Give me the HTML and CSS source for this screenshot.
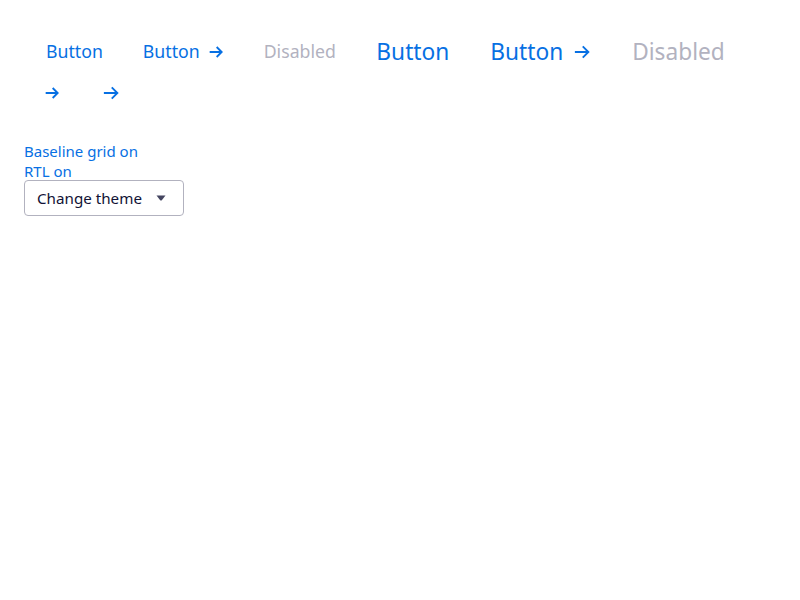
FILE: index.html
```html
<!DOCTYPE html>
<html>
<head>
<meta charset="utf-8">
<link rel="stylesheet" href="styles.css">
</head>
<body>
<div class="page">
  <div class="buttons">
    <button class="link">Button</button>
    <button class="link">Button <svg class="arr" width="16" height="16" viewBox="0 0 24 24"><path d="M2.5 12h18M13 4.5l7.5 7.5-7.5 7.5" fill="none" stroke="currentColor" stroke-width="2.8"/></svg></button>
    <button class="link disabled">Disabled</button>
    <button class="link large">Button</button>
    <button class="link large">Button <svg class="arr" width="18" height="18" viewBox="0 0 24 24"><path d="M2.5 12h18M13 4.5l7.5 7.5-7.5 7.5" fill="none" stroke="currentColor" stroke-width="2.5"/></svg></button>
    <button class="link large disabled">Disabled</button>
    <button class="link icon"><svg width="16" height="16" viewBox="0 0 24 24"><path d="M2.5 12h18M13 4.5l7.5 7.5-7.5 7.5" fill="none" stroke="currentColor" stroke-width="2.8"/></svg></button>
    <button class="link icon"><svg width="18" height="18" viewBox="0 0 24 24"><path d="M2.5 12h18M13 4.5l7.5 7.5-7.5 7.5" fill="none" stroke="currentColor" stroke-width="2.5"/></svg></button>
  </div>
  <div class="controls">
    <a class="toggle">Baseline grid on</a>
    <a class="toggle">RTL on</a>
    <div class="select">Change theme <svg class="caret" width="10" height="6" viewBox="0 0 10 6"><path d="M0.5 0.5h9L5.8 5.2a1.1 1.1 0 0 1-1.6 0z" fill="#444560"/></svg></div>
  </div>
</div>
</body>
</html>
```
FILE: styles.css
```css
html, body { margin: 0; padding: 0; background: #fff; }
body { font-family: "Noto Sans", sans-serif; }
.page { padding: 31px 24px 24px 26px; }
.buttons { display: flex; flex-wrap: wrap; align-items: center; }
.link {
  background: none; border: 0; padding: 0 20px; margin: 0;
  font-family: inherit; font-size: 17.7px; line-height: 41px; color: #0770e3;
  display: flex; align-items: center; gap: 8px; height: 41px; cursor: pointer;
}
.link.large { font-size: 22.7px; gap: 10px; padding: 0 20.5px; }
.link.disabled { color: #b2b2bf; }
.link.icon { padding: 0 24px 0 18px; }
.controls { display: flex; flex-direction: column; align-items: flex-start; margin: 28px 0 0 -2px; }
.toggle { color: #0770e3; font-size: 15px; line-height: 20px; }
.select {
  box-sizing: border-box; width: 160px; height: 36px; border: 1px solid #b2b2bf; border-radius: 4px;
  display: flex; align-items: center; justify-content: space-between; padding: 0 17px 0 12px;
  font-size: 15.2px; color: #111236; margin-top: -1px;
}
.caret { display: block; margin-top: -1px; }
```
